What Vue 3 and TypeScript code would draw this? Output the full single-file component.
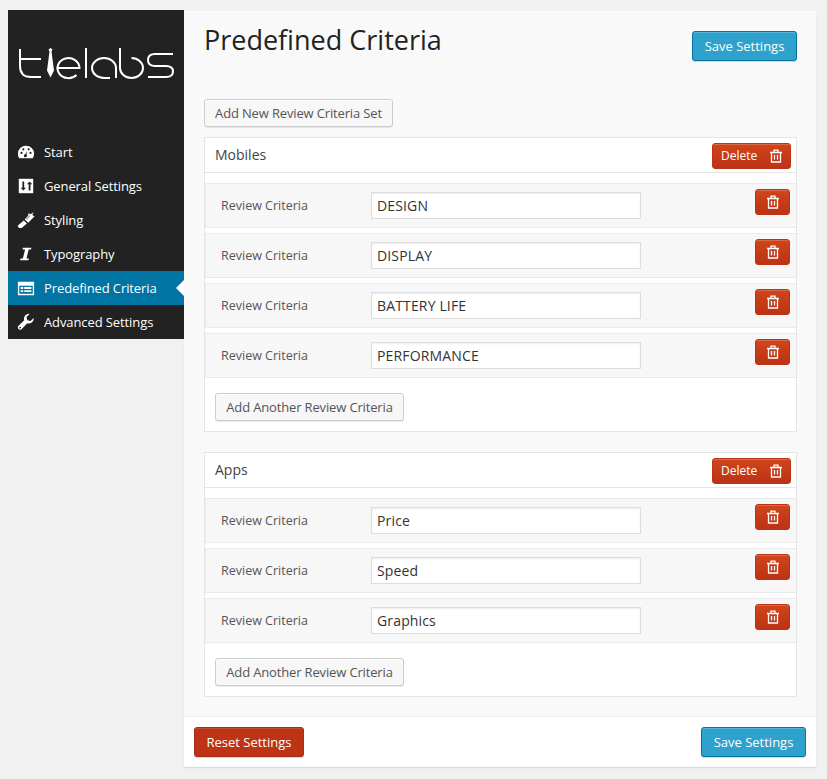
<script setup lang="ts">
interface Item { label: string; icon: string; active?: boolean }
interface CriteriaSet { name: string; rows: string[] }

const menu: Item[] = [
  { label: 'Start', icon: 'gauge' },
  { label: 'General Settings', icon: 'sliders' },
  { label: 'Styling', icon: 'brush' },
  { label: 'Typography', icon: 'italic' },
  { label: 'Predefined Criteria', icon: 'list', active: true },
  { label: 'Advanced Settings', icon: 'wrench' },
]

const sets: CriteriaSet[] = [
  { name: 'Mobiles', rows: ['DESIGN', 'DISPLAY', 'BATTERY LIFE', 'PERFORMANCE'] },
  { name: 'Apps', rows: ['Price', 'Speed', 'Graphics'] },
]
</script>

<template>
  <div class="page">
    <aside class="sidebar">
      <div class="logo">
        <svg width="176" height="50" viewBox="8 37 176 50" role="img" aria-label="tielabs" fill="none" stroke="#fff" stroke-width="2">
          <path d="M20 49V66Q20 77 31 77H41M20 59H41" />
          <path d="M50.500 48l2 1.500-1 2 2.500 19-3.500 7-3.500-7 2.500-19-1-2z" fill="#fff" stroke="none" />
          <path d="M58 68H79.500A11 10 0 1 0 76.500 75" />
          <path d="M86 48V78" />
          <path d="M116 78V68A12 10 0 1 0 104 78H110" />
          <path d="M120 48V68A11.500 10 0 1 0 131.500 58" />
          <path d="M173 54H155Q148 54 148 60Q148 66 155 66H166Q173 66 173 71.500Q173 77 166 77H148" />
        </svg>
      </div>
      <ul class="menu">
        <li v-for="item in menu" :key="item.label" class="menu-item" :class="{ active: item.active }">
          <svg class="menu-icon" viewBox="0 0 20 20" fill="#fff">
            <template v-if="item.icon === 'gauge'">
              <path d="M10 3a9 9 0 0 0-9 9c0 2 .6 3.600 1.500 5h15a9 9 0 0 0 1.500-5 9 9 0 0 0-9-9z" />
              <path d="M10.800 8.500 9.300 12.400a1.700 1.700 0 1 0 1.300.5z" fill="#222" />
              <circle cx="5" cy="11" r="1.200" fill="#222" />
              <circle cx="7" cy="7" r="1.200" fill="#222" />
              <circle cx="13" cy="7" r="1.200" fill="#222" />
              <circle cx="15" cy="11" r="1.200" fill="#222" />
            </template>
            <template v-else-if="item.icon === 'sliders'">
              <path d="M2 2h16v16H2z" />
              <path d="M6 5v7H4l3 3 3-3H8V5zM13 15V8h-2l3-3 3 3h-2v7z" fill="#222" />
            </template>
            <template v-else-if="item.icon === 'brush'">
              <path d="M1 16 7.500 10.500 11 14 5.500 18.500Q3.500 19.500 1.800 18.200Q.8 17.200 1 16z" />
              <path d="M8.500 9.500 12 5.500 13 2.500 15 3.500 18.500 1.500 17 4.500 19.500 6 16.500 9 12.500 13z" />
              <path d="M9.500 9 13.500 4.500 15 5.500 11 10z" fill="#222" opacity=".35" />
            </template>
            <template v-else-if="item.icon === 'italic'">
              <path d="M6.500 3H16l-.4 2H13l-2.500 10h2.600L12.700 17H3.500l.4-2h2.600L9 5H6.200z" />
            </template>
            <template v-else-if="item.icon === 'list'">
              <path fill-rule="evenodd" d="M1 3h18v15H1zM2.500 7.500v9h15v-9z" />
              <path d="M4 9h3v2H4zM8 9h8v2H8zM4 12.500h3v2H4zM8 12.500h8v2H8z" />
            </template>
            <template v-else>
              <path d="M18.500 5.500 15 9l-3.500-1L10.500 4.500 14 1a5.500 5.500 0 0 0-6 7L1.500 14.500a2.500 2.500 0 0 0 3.500 3.500L11.500 11.500a5.500 5.500 0 0 0 7-6z" />
              <circle cx="3.500" cy="16.200" r="1" fill="#222" />
            </template>
          </svg>
          <span>{{ item.label }}</span>
        </li>
      </ul>
    </aside>

    <main class="panel">
      <div class="panel-body">
        <header class="panel-head">
          <h1>Predefined Criteria</h1>
          <button class="btn blue top-save">Save Settings</button>
        </header>
        <button class="btn plain add-set">Add New Review Criteria Set</button>
        <section v-for="set in sets" :key="set.name" class="set">
          <div class="set-head">
            <span class="set-name">{{ set.name }}</span>
            <button class="btn red delete">
              Delete
              <svg class="trash" viewBox="0 0 14 14" fill="none" stroke="#fff" stroke-width="1.300">
                <path d="M1 3.500h12M2.500 3.500v9.500h9V3.500M5 3.500V1.200h4v2.300M5.500 6v4.500M8.500 6v4.500" />
              </svg>
            </button>
          </div>
          <div class="rows">
            <div v-for="row in set.rows" :key="row" class="row">
              <label>Review Criteria</label>
              <input type="text" :value="row" />
              <button class="btn red remove" aria-label="Remove">
                <svg class="trash" viewBox="0 0 14 14" fill="none" stroke="#fff" stroke-width="1.300">
                  <path d="M1 3.500h12M2.500 3.500v9.500h9V3.500M5 3.500V1.200h4v2.300M5.500 6v4.500M8.500 6v4.500" />
                </svg>
              </button>
            </div>
          </div>
          <button class="btn plain add-row">Add Another Review Criteria</button>
        </section>
      </div>
      <footer class="panel-foot">
        <button class="btn reset">Reset Settings</button>
        <button class="btn blue">Save Settings</button>
      </footer>
    </main>
  </div>
</template>

<style>
html, body { background: #f1f1f1; }
</style>

<style scoped>
.page {
  display: flex;
  align-items: flex-start;
  width: 827px;
  height: 779px;
  box-sizing: border-box;
  padding: 10px 11px 0 8px;
  font-family: "Open Sans", sans-serif;
  font-size: 13px;
  color: #444;
  background: #f1f1f1;
}
.sidebar { width: 176px; flex: none; background: #222; color: #fff; }
.logo { height: 125px; padding-top: 27px; box-sizing: border-box; }
.logo svg { display: block; }
.menu { list-style: none; margin: 0; padding: 0; }
.menu-item {
  position: relative;
  display: flex;
  align-items: center;
  gap: 9px;
  height: 34px;
  padding-left: 9px;
  font-size: 13px;
  letter-spacing: -0.1px;
  color: #fff;
}
.menu-item.active { background: #0074a2; }
.menu-item.active::after {
  content: "";
  position: absolute;
  right: 0;
  top: 9px;
  border: 8px solid transparent;
  border-left: 0;
  border-right-color: #fff;
}
.menu-icon { width: 18px; height: 18px; flex: none; }
.panel {
  width: 632px;
  height: 756px;
  margin-top: 1px;
  flex: none;
  display: flex;
  flex-direction: column;
  background: #f9f9f9;
  box-shadow: 0 1px 1px rgba(0, 0, 0, 0.1);
}
.panel-body { flex: 1; padding: 0 19px 0 20px; }
.panel-head { display: flex; justify-content: space-between; height: 88px; box-sizing: border-box; padding-top: 20px; }
h1 { margin: -11px 0 0; height: 40px; font-size: 27px; font-weight: 400; line-height: 40px; color: #222; }
.btn {
  font-family: inherit;
  font-size: 13px;
  line-height: 1;
  border-radius: 3px;
  cursor: pointer;
  box-sizing: border-box;
  white-space: nowrap;
}
.blue {
  width: 105px;
  height: 30px;
  padding: 0;
  color: #fff;
  background: #2ea2cc;
  border: 1px solid #0074a2;
  box-shadow: inset 0 1px 0 rgba(120, 200, 230, 0.5), 0 1px 0 rgba(0, 0, 0, 0.15);
}
.plain {
  height: 28px;
  padding: 0 10px;
  color: #555;
  background: #f7f7f7;
  border: 1px solid #ccc;
  letter-spacing: -0.15px;
  box-shadow: inset 0 1px 0 #fff, 0 1px 0 rgba(0, 0, 0, 0.08);
}
.add-set { display: block; width: 189px; margin-bottom: 10px; }
.set {
  box-sizing: border-box;
  margin-bottom: 20px;
  background: #fff;
  border: 1px solid #e5e5e5;
  padding-bottom: 10px;
}
.set:last-child { margin-bottom: 19px; }
.set-head {
  display: flex;
  align-items: center;
  justify-content: space-between;
  height: 35px;
  box-sizing: border-box;
  padding: 2px 5px 0 10px;
  border-bottom: 1px solid #e5e5e5;
}
.set-name { margin-top: -4px; font-size: 14px; color: #444; }
.red {
  color: #fff;
  background: linear-gradient(#d0451b, #bc3315);
  border: 1px solid #bc3315;
  padding: 0;
  box-shadow: inset 0 1px 0 rgba(255, 255, 255, 0.2);
  display: flex;
  align-items: center;
  justify-content: center;
}
.delete { width: 79px; height: 26px; gap: 12px; font-size: 12px; font-weight: 400; justify-content: flex-start; padding-left: 8px; }
.trash { width: 14px; height: 14px; flex: none; }
.rows { display: flex; flex-direction: column; gap: 5px; padding-top: 10px; }
.row {
  display: flex;
  align-items: flex-start;
  height: 45px;
  box-sizing: border-box;
  background: #f7f7f7;
  border: 1px solid #ebebeb;
  border-right: 0;
  padding: 8px 6px 0 15px;
}
.row label { width: 150px; padding-top: 5px; font-size: 12.500px; line-height: 17px; color: #555; flex: none; }
.row input {
  width: 270px;
  height: 27px;
  box-sizing: border-box;
  padding: 0 5px;
  border: 1px solid #ddd;
  box-shadow: inset 0 1px 2px rgba(0, 0, 0, 0.07);
  background: #fff;
  font-family: inherit;
  font-size: 14px;
  letter-spacing: 0.15px;
  color: #333;
  outline: 0;
}
.remove { width: 35px; height: 26px; margin: -3px 0 0 auto; }
.add-row { display: block; width: 189px; margin: 15px 0 0 10px; }
.panel-foot {
  flex: none;
  height: 51px;
  box-sizing: border-box;
  display: flex;
  align-items: flex-start;
  justify-content: space-between;
  padding: 10px 10px 0;
  background: #fff;
  border-top: 1px solid #eee;
}
.reset {
  width: 110px;
  height: 30px;
  padding: 0;
  color: #fff;
  background: #bc3315;
  border: 1px solid #a92d12;
  box-shadow: inset 0 1px 0 rgba(255, 255, 255, 0.12), 0 1px 0 rgba(0, 0, 0, 0.15);
}
</style>
